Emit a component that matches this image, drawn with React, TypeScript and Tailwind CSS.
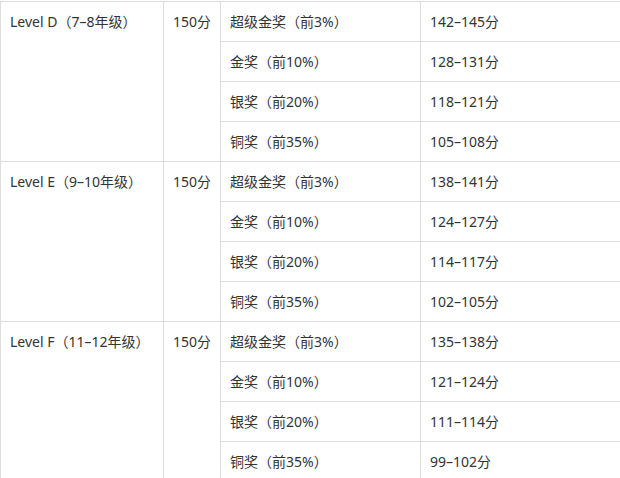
import React from 'react';

interface Award {
  name: string;
  range: string;
}

interface LevelGroup {
  level: string;
  total: string;
  awards: Award[];
}

const GROUPS: LevelGroup[] = [
  {
    level: 'Level D（7–8年级）',
    total: '150分',
    awards: [
      { name: '超级金奖（前3%）', range: '142–145分' },
      { name: '金奖（前10%）', range: '128–131分' },
      { name: '银奖（前20%）', range: '118–121分' },
      { name: '铜奖（前35%）', range: '105–108分' },
    ],
  },
  {
    level: 'Level E（9–10年级）',
    total: '150分',
    awards: [
      { name: '超级金奖（前3%）', range: '138–141分' },
      { name: '金奖（前10%）', range: '124–127分' },
      { name: '银奖（前20%）', range: '114–117分' },
      { name: '铜奖（前35%）', range: '102–105分' },
    ],
  },
  {
    level: 'Level F（11–12年级）',
    total: '150分',
    awards: [
      { name: '超级金奖（前3%）', range: '135–138分' },
      { name: '金奖（前10%）', range: '121–124分' },
      { name: '银奖（前20%）', range: '111–114分' },
      { name: '铜奖（前35%）', range: '99–102分' },
    ],
  },
];

const cell = 'border border-[#dddddd] h-10 px-[9px] py-0 align-middle text-left font-normal whitespace-nowrap';

export default function App() {
  return (
    <div
      className="min-h-screen bg-white pt-px text-[14px] leading-5 text-[#333333]"
      style={{ fontFamily: '"Noto Sans", "Noto Sans CJK SC", sans-serif' }}
    >
      <table className="w-[621px] table-fixed border-collapse">
        <colgroup>
          <col className="w-[163px]" />
          <col className="w-[57px]" />
          <col className="w-[200px]" />
          <col className="w-[201px]" />
        </colgroup>
        <tbody>
          {GROUPS.map(group =>
            group.awards.map((award, i) => (
              <tr key={group.level + award.name}>
                {i === 0 && (
                  <>
                    <td rowSpan={group.awards.length} className={`${cell} !align-top pt-[10px]`}>
                      {group.level}
                    </td>
                    <td rowSpan={group.awards.length} className={`${cell} !align-top pt-[10px]`}>
                      {group.total}
                    </td>
                  </>
                )}
                <td className={cell}>{award.name}</td>
                <td className={cell}>{award.range}</td>
              </tr>
            ))
          )}
        </tbody>
      </table>
    </div>
  );
}
